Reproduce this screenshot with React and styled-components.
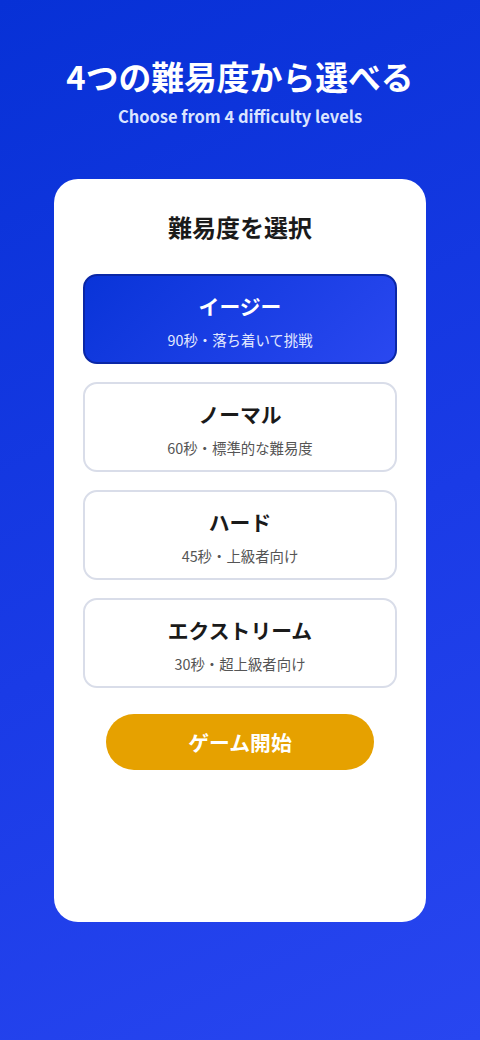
import styled, { createGlobalStyle } from "styled-components"

const GlobalStyle = createGlobalStyle`
    * { box-sizing: border-box; }
    html, body {
        margin: 0;
        padding: 0;
    }
    body {
        font-family: "Noto Sans CJK JP", "Noto Sans", sans-serif;
        background: #0b33d8;
    }
`

const Page = styled.div`
    min-height: 1040px;
    display: flex;
    flex-direction: column;
    align-items: center;
    padding: 52px 54px 118px;
    background: linear-gradient(155deg, #0731d6 0%, #1a3be6 55%, #2846f0 100%);
`

const Header = styled.header`
    display: flex;
    flex-direction: column;
    align-items: center;
    gap: 4px;
    margin-bottom: 51px;
`

const Title = styled.h1`
    margin: 0;
    font-size: 32.8px;
    line-height: 48px;
    font-weight: 700;
    color: #ffffff;
`

const Subtitle = styled.p`
    margin: 0;
    font-size: 16.5px;
    line-height: 24px;
    font-weight: 600;
    color: #dbe4ff;
`

const Card = styled.main`
    width: 372px;
    min-height: 743px;
    background: #ffffff;
    border-radius: 24px;
    padding: 32px 29px;
    display: flex;
    flex-direction: column;
    align-items: center;
`

const CardHeading = styled.h2`
    margin: 0 0 31px;
    font-size: 24px;
    line-height: 32px;
    font-weight: 700;
    color: #1a1a1a;
`

const OptionList = styled.div`
    width: 100%;
    display: flex;
    flex-direction: column;
    gap: 18px;
`

const Option = styled.button`
    width: 100%;
    height: 90px;
    padding: 16px;
    border-radius: 14px;
    border: 2px solid ${({ $active }) => ($active ? "#0a27a6" : "#d9dde9")};
    background: ${({ $active }) =>
        $active ? "linear-gradient(135deg, #0934d8 0%, #2a48f0 100%)" : "#ffffff"};
    display: flex;
    flex-direction: column;
    align-items: center;
    gap: 10px;
    font-family: inherit;
    cursor: pointer;
`

const OptionName = styled.span`
    font-size: 20.8px;
    line-height: 28px;
    font-weight: 700;
    color: ${({ $active }) => ($active ? "#ffffff" : "#1a1a1a")};
`

const OptionDesc = styled.span`
    font-size: 14.4px;
    line-height: 20px;
    font-weight: 400;
    color: ${({ $active }) => ($active ? "#e3e9ff" : "#555555")};
`

const StartButton = styled.button`
    margin-top: 26px;
    width: 268px;
    height: 56px;
    border: none;
    border-radius: 28px;
    background: #e6a100;
    color: #ffffff;
    font-family: inherit;
    font-size: 20.8px;
    font-weight: 700;
    cursor: pointer;
`

const levels = [
    { name: "イージー", desc: "90秒・落ち着いて挑戦" },
    { name: "ノーマル", desc: "60秒・標準的な難易度" },
    { name: "ハード", desc: "45秒・上級者向け" },
    { name: "エクストリーム", desc: "30秒・超上級者向け" },
]

export default function App() {
    const selected = 0
    return (
        <>
            <GlobalStyle />
            <Page>
                <Header>
                    <Title>4つの難易度から選べる</Title>
                    <Subtitle>Choose from 4 difficulty levels</Subtitle>
                </Header>
                <Card>
                    <CardHeading>難易度を選択</CardHeading>
                    <OptionList>
                        {levels.map((level, index) => (
                            <Option key={level.name} $active={index === selected}>
                                <OptionName $active={index === selected}>{level.name}</OptionName>
                                <OptionDesc $active={index === selected}>{level.desc}</OptionDesc>
                            </Option>
                        ))}
                    </OptionList>
                    <StartButton>ゲーム開始</StartButton>
                </Card>
            </Page>
        </>
    )
}
